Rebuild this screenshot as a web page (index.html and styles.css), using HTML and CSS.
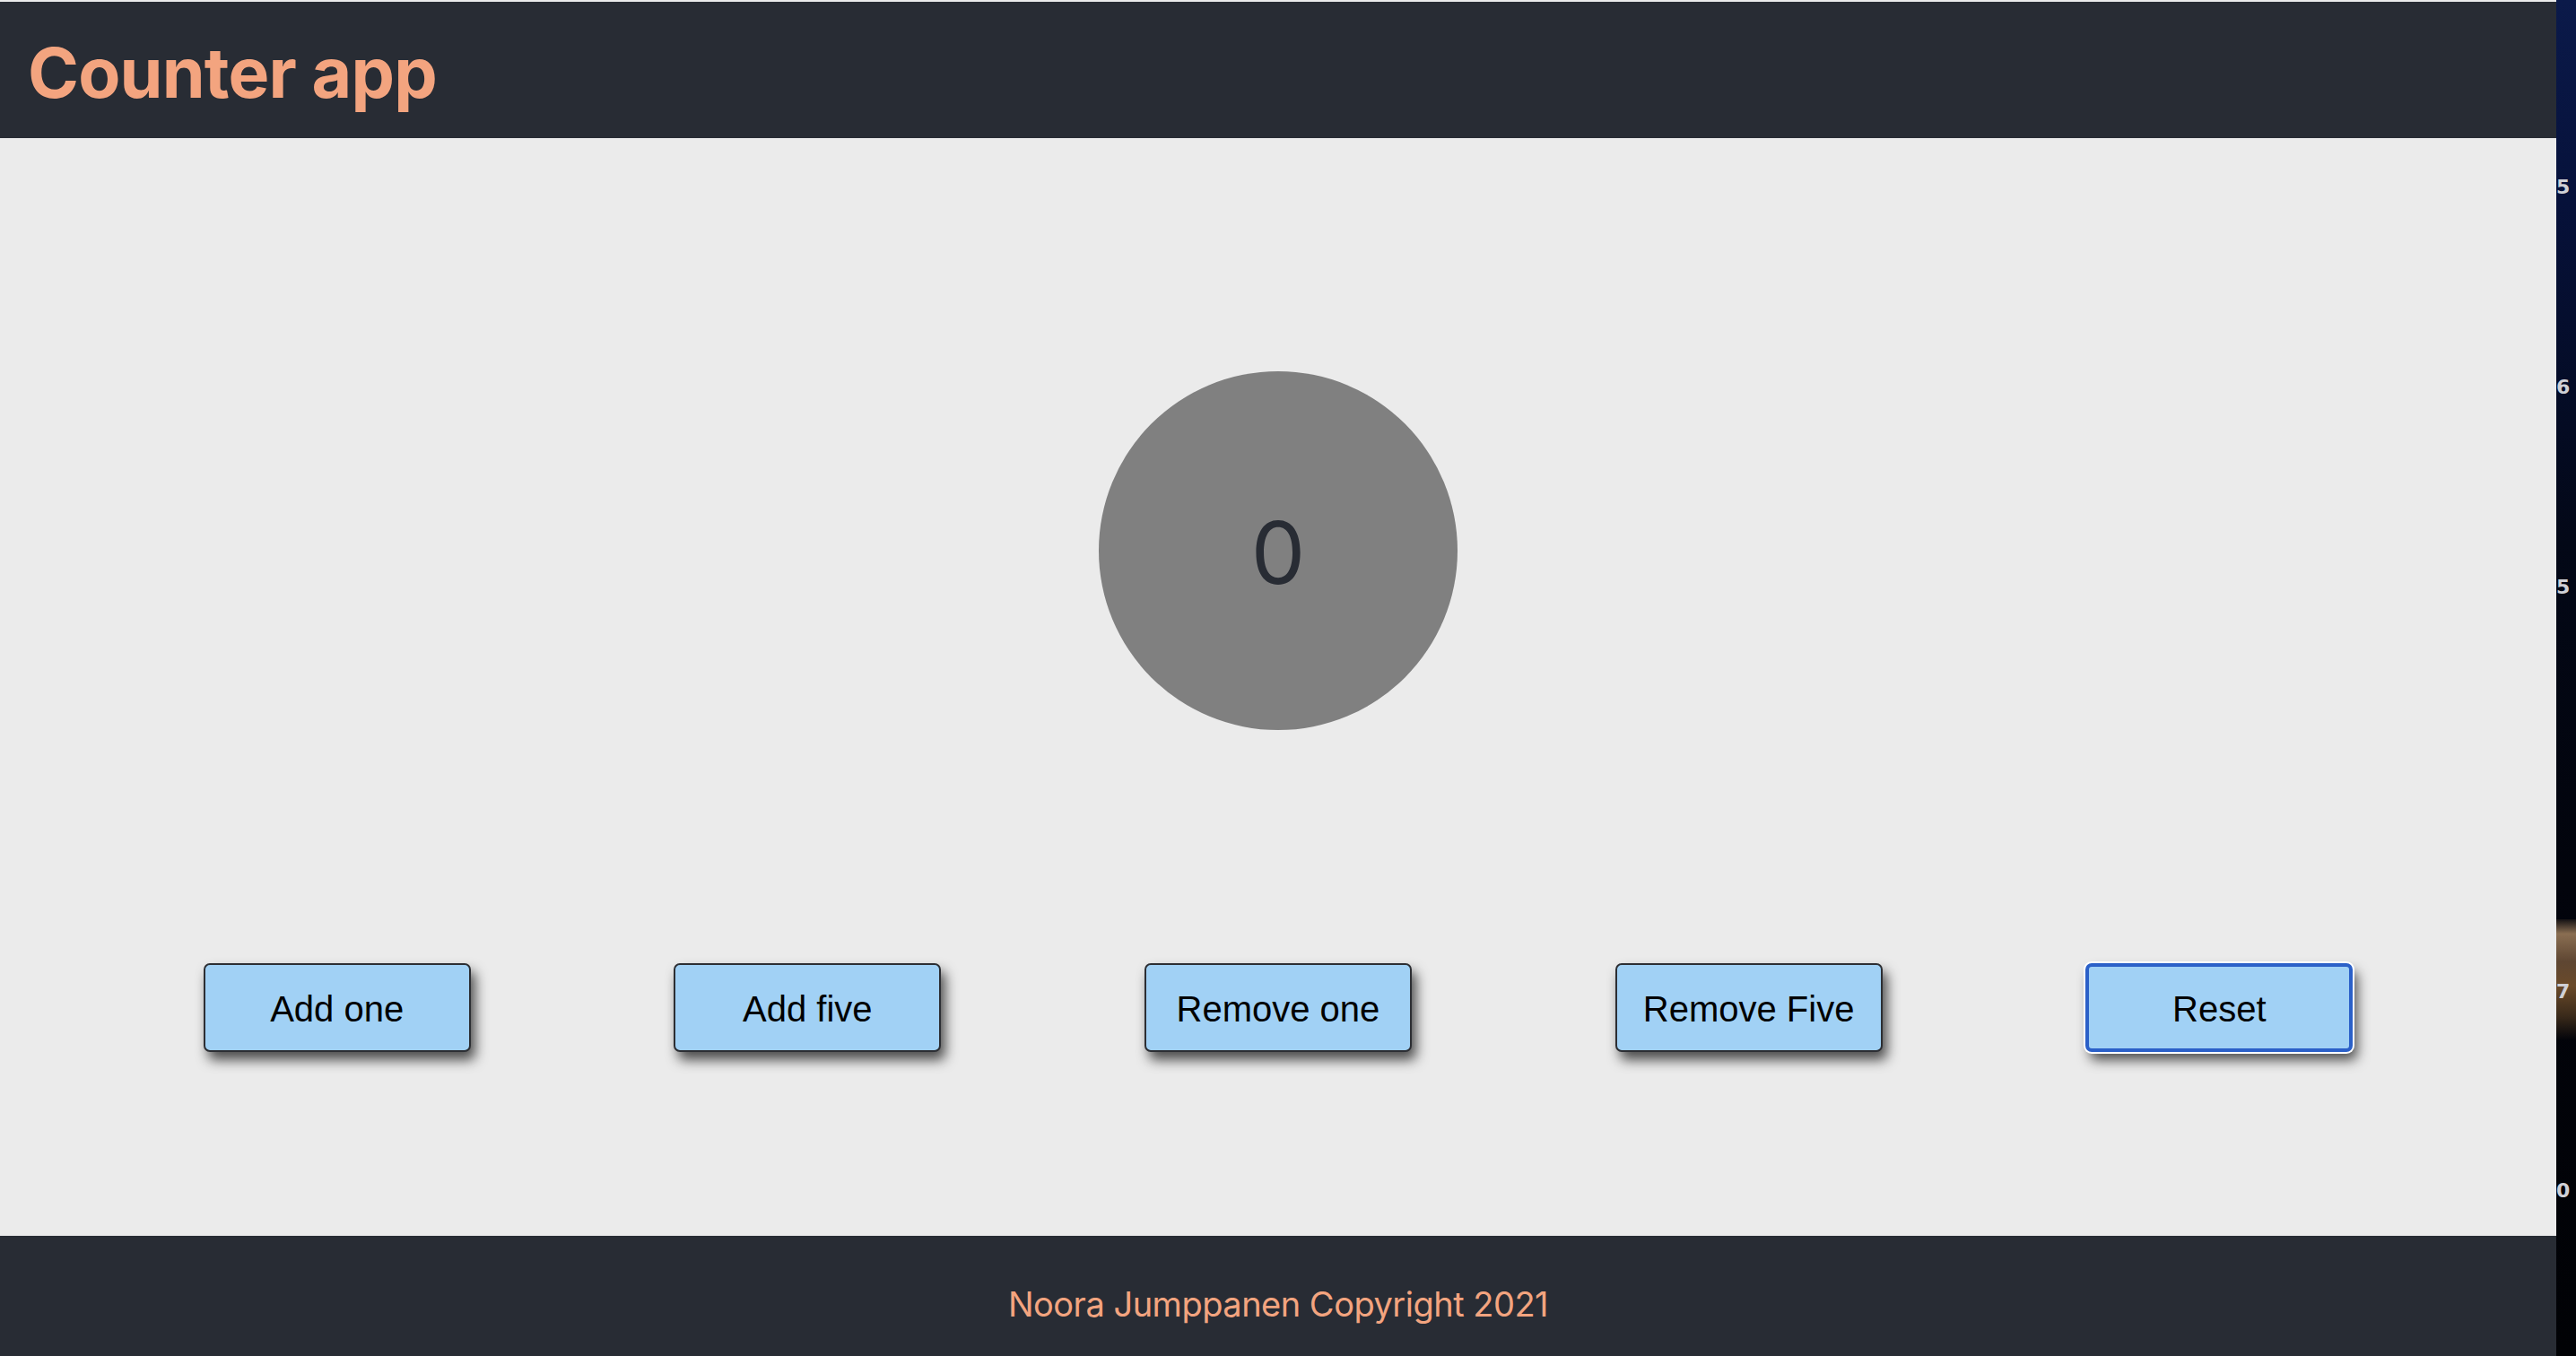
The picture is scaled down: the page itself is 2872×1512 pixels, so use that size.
FILE: index.html
```html
<!DOCTYPE html>
<html lang="en">
<head>
<meta charset="utf-8">
<title>Counter app</title>
<link rel="stylesheet" href="styles.css">
</head>
<body>
  <div class="screen">
    <div class="window">
      <header class="app-header">
        <h1 class="app-title">Counter app</h1>
      </header>
      <main class="app-main">
        <div class="counter">0</div>
        <div class="controls">
          <button class="btn">Add one</button>
          <button class="btn">Add five</button>
          <button class="btn">Remove one</button>
          <button class="btn">Remove Five</button>
          <button class="btn btn-focused">Reset</button>
        </div>
      </main>
      <footer class="app-footer">
        <p class="copyright">Noora Jumppanen Copyright 2021</p>
      </footer>
    </div>
    <div class="desktop">
      <div class="blob"></div>
      <span class="dgt d1">5</span>
      <span class="dgt d2">6</span>
      <span class="dgt d3">5</span>
      <span class="dgt d4">7</span>
      <span class="dgt d5">0</span>
    </div>
  </div>
</body>
</html>
```

FILE: styles.css
```css
* { box-sizing: border-box; }
html, body {
  margin: 0;
  padding: 0;
  width: 2872px;
  height: 1512px;
  overflow: hidden;
}
body {
  font-family: Inter, "Noto Sans", sans-serif;
  background: #000;
}
.screen {
  display: flex;
  width: 2872px;
  height: 1512px;
}
.window {
  flex: 0 0 2850px;
  display: flex;
  flex-direction: column;
  background: #ebebeb;
  padding-top: 2px;
}
.app-header {
  height: 152px;
  background: #282c34;
  display: flex;
  align-items: center;
  padding-left: 31px;
  padding-top: 7px;
}
.app-title {
  margin: 0;
  font-family: Inter, sans-serif;
  font-weight: 700;
  font-size: 77px;
  line-height: 1;
  color: #f3a47f;
  letter-spacing: -0.8px;
}
.app-main {
  flex: 1;
  display: flex;
  flex-direction: column;
  align-items: center;
  padding-top: 260px;
}
.counter {
  width: 400px;
  height: 400px;
  border-radius: 50%;
  background: #808080;
  display: flex;
  align-items: center;
  justify-content: center;
  font-family: Inter, sans-serif;
  font-size: 96px;
  line-height: 1;
  color: #282c34;
  padding-top: 4px;
}
.controls {
  margin-top: 260px;
  width: 100%;
  display: flex;
  justify-content: space-evenly;
}
.btn {
  width: 298px;
  height: 99px;
  border: 2px solid #2c2e33;
  border-radius: 7px;
  background: #a1d1f5;
  font-family: "Liberation Sans", Arial, sans-serif;
  font-size: 40px;
  color: #000;
  padding: 0 0 0 0;
  line-height: 1;
  padding-top: 2px;
  box-shadow: 5px 9px 14px rgba(0, 0, 0, 0.68);
}
.btn-focused {
  border: 4px solid #2b60c8;
  box-shadow: 0 0 0 2px #ffffff, 5px 9px 14px rgba(0, 0, 0, 0.68);
}
.app-footer {
  height: 134px;
  background: #282c34;
  display: flex;
  align-items: center;
  justify-content: center;
  padding-top: 18px;
}
.copyright {
  margin: 0;
  font-family: Inter, sans-serif;
  font-size: 38px;
  line-height: 1;
  color: #f3a47f;
  letter-spacing: -0.5px;
}
.desktop {
  flex: 1;
  position: relative;
  overflow: hidden;
  background: linear-gradient(180deg, #0b1a4a 0%, #06113a 15%, #030817 40%, #02040c 65%, #010205 100%);
}
.blob {
  position: absolute;
  left: 0;
  top: 1025px;
  width: 22px;
  height: 135px;
  background: linear-gradient(180deg, rgba(90,70,50,0.2) 0%, #8a6e52 12%, #5e4632 35%, #6a4a2a 55%, #3a2a1a 80%, rgba(10,8,6,0) 100%);
}
.dgt {
  position: absolute;
  left: 0;
  font-family: "DejaVu Sans", sans-serif;
  font-weight: 700;
  font-size: 22px;
  line-height: 1;
  color: #cfd0d6;
}
.d1 { top: 198px; }
.d2 { top: 421px; }
.d3 { top: 644px; }
.d4 { top: 1095px; }
.d5 { top: 1317px; }
```
